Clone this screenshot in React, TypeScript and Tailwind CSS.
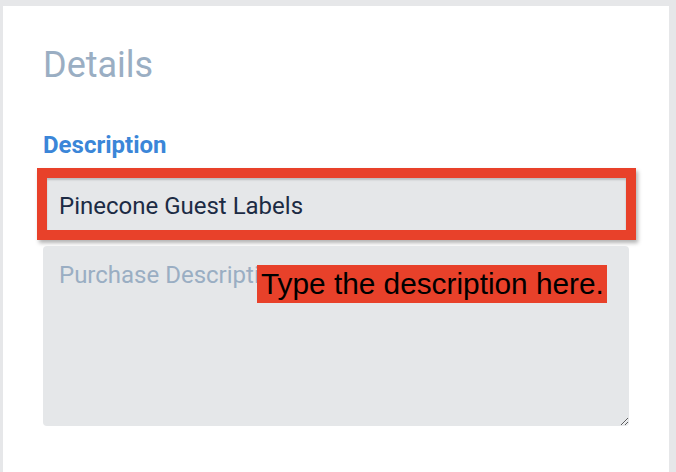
import React from "react";

export default function App() {
  return (
    <div className="min-h-[472px] w-full bg-[#e6e7e9] pt-[6px] pl-[3px] pr-[7px] font-['Roboto',sans-serif]">
      <div className="min-h-[466px] bg-white pt-[38px] pl-[40px] pr-[40px]">
        <h1 className="text-[36px] leading-[43px] font-normal text-[#9aaec3]">Details</h1>
        <div className="mt-[44px] text-[24px] leading-[28px] font-bold text-[#3b86d8]">Description</div>
        <div className="mt-[9px] ml-[-6px] mr-[-7px] border-[10px] border-[#e8412a] shadow-[2px_3px_4px_rgba(0,0,0,0.3)]">
          <div className="h-[52px] flex items-center bg-[#e5e7e9] pl-[12px] pt-[3px] shadow-[inset_0_2px_2px_rgba(0,0,0,0.18)]">
            <span className="text-[24px] leading-[28px] text-[#1c2b44]">Pinecone Guest Labels</span>
          </div>
        </div>
        <div className="relative mt-[6px]">
          <textarea
            placeholder="Purchase Description"
            className="block w-full h-[180px] rounded-[4px] bg-[#e5e7e9] pl-[16px] pt-[15px] text-[24px] leading-[28px] text-[#1c2b44] placeholder:text-[#9aaec3] outline-none font-['Roboto',sans-serif]"
          />
          <div className="absolute left-[214px] top-[19px] h-[38px] w-[350px] bg-[#e8412a] pl-[4px] font-['Liberation_Sans',Arial,sans-serif] text-[29.8px] leading-[38px] text-black whitespace-nowrap">
            Type the description here.
          </div>
        </div>
      </div>
    </div>
  );
}
